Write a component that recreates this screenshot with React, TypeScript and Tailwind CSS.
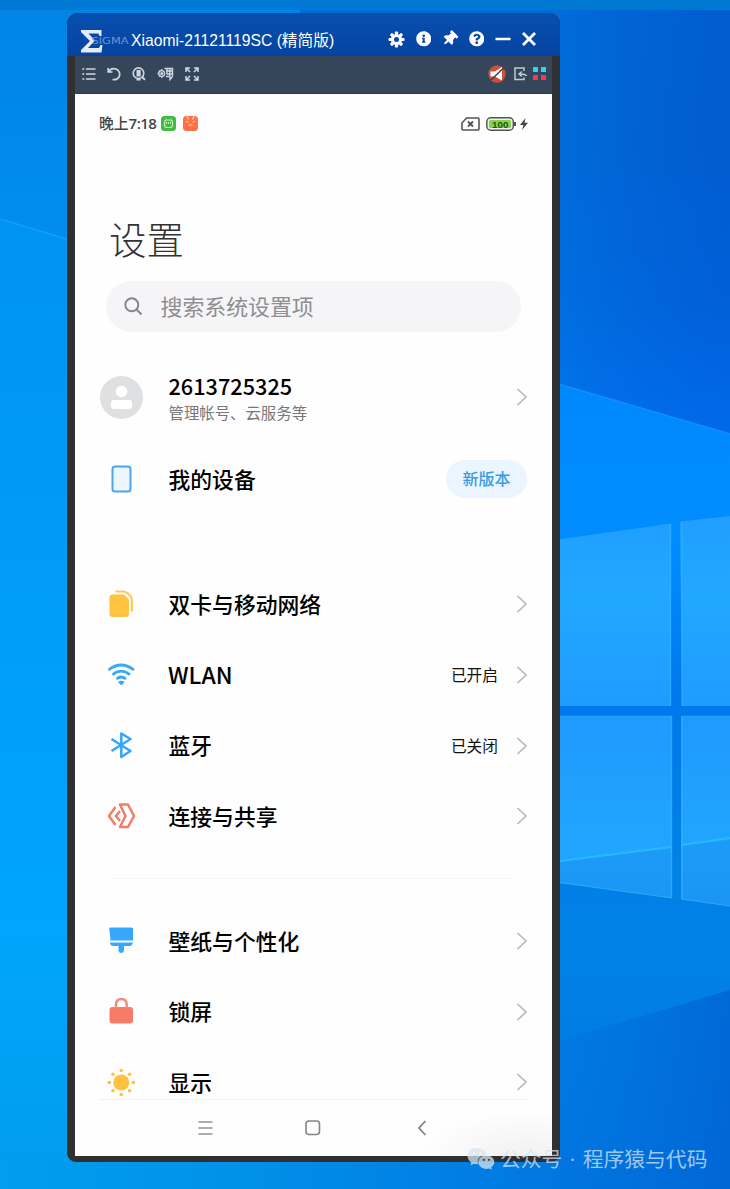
import React from "react";
import { FaInfoCircle, FaQuestionCircle, FaThumbtack, FaWeixin } from "react-icons/fa";

const CJK = "font-['Noto_Sans_CJK_SC',sans-serif]";

function Wallpaper() {
  return (
    <svg className="absolute inset-0 h-full w-full" viewBox="0 0 730 1189" preserveAspectRatio="none">
      <defs>
        <linearGradient id="left" x1="0" y1="0" x2="0" y2="1">
          <stop offset="0" stopColor="#0084e6" />
          <stop offset="0.2" stopColor="#008eec" />
          <stop offset="0.5" stopColor="#009bf6" />
          <stop offset="0.78" stopColor="#00a6fc" />
          <stop offset="1" stopColor="#009cee" />
        </linearGradient>
        <linearGradient id="right" x1="0" y1="0" x2="0" y2="1">
          <stop offset="0" stopColor="#0062d0" />
          <stop offset="0.12" stopColor="#0060d0" />
          <stop offset="0.25" stopColor="#0064de" />
          <stop offset="0.36" stopColor="#0072f6" />
          <stop offset="0.5" stopColor="#0078e8" />
          <stop offset="0.8" stopColor="#0082e6" />
          <stop offset="1" stopColor="#0074de" />
        </linearGradient>
        <linearGradient id="beam" x1="0" y1="0" x2="0" y2="1">
          <stop offset="0" stopColor="#0088fc" />
          <stop offset="0.27" stopColor="#008dff" />
          <stop offset="0.38" stopColor="#0088fb" />
          <stop offset="0.6" stopColor="#0078ea" />
          <stop offset="1" stopColor="#0084e6" />
        </linearGradient>
        <linearGradient id="paneTop" x1="0" y1="0" x2="0" y2="1">
          <stop offset="0" stopColor="#1f9eff" />
          <stop offset="0.4" stopColor="#22a8ff" />
          <stop offset="1" stopColor="#1e9cff" />
        </linearGradient>
        <linearGradient id="paneLow" x1="0" y1="0" x2="0" y2="1">
          <stop offset="0" stopColor="#1f99fe" />
          <stop offset="0.7" stopColor="#20a6ff" />
          <stop offset="1" stopColor="#1c98f6" />
        </linearGradient>
        <linearGradient id="floor" gradientUnits="userSpaceOnUse" x1="0" y1="0" x2="560" y2="0">
          <stop offset="0" stopColor="#009eee" />
          <stop offset="0.4" stopColor="#0092ea" />
          <stop offset="1" stopColor="#0077e0" />
        </linearGradient>
        <linearGradient id="edge" gradientUnits="userSpaceOnUse" x1="555" y1="0" x2="730" y2="0">
          <stop offset="0" stopColor="#0078e4" stopOpacity="0.5" />
          <stop offset="1" stopColor="#0054cc" stopOpacity="0.3" />
        </linearGradient>
        <linearGradient id="corner" gradientUnits="userSpaceOnUse" x1="555" y1="0" x2="730" y2="0">
          <stop offset="0" stopColor="#0076e2" stopOpacity="0.5" />
          <stop offset="1" stopColor="#0062d2" stopOpacity="0.75" />
        </linearGradient>
      </defs>
      <rect width="300" height="1189" fill="url(#left)" />
      <path d="M0 219L70 240V925L0 940Z" fill="#00a2ff" opacity="0.3" />
      <path d="M0 219L70 240" stroke="#18a4f8" strokeWidth="1.5" opacity="0.8" />
      <rect x="300" width="430" height="1189" fill="url(#right)" />
      <rect x="300" width="430" height="440" fill="url(#edge)" />
      <path d="M555 383L730 434V905L555 882Z" fill="url(#beam)" />
      <path d="M555 383L720 431L730 434" stroke="#1892fb" strokeWidth="1.500" fill="none" opacity="0.8" />
      <path d="M555 540L671 523.5V706H555ZM680 521.5L730 516V706H682Z" fill="url(#paneTop)" />
      <path d="M555 716H672V898L555 882ZM681 716H730V906L681 899Z" fill="url(#paneLow)" />
      <path d="M555 863L671 848V897.5L555 881ZM682 846L730 840V905L682 899Z" fill="#1b92f2" opacity="0.6" />
      <path d="M555 861.5L671 847M681 845L730 838" stroke="#28b8ff" strokeWidth="2" />
      <path d="M670.500 524V706M682 522V706M671.500 716V898M682 716V899" stroke="#30b2ff" strokeWidth="1.600" opacity="0.6" />
      <path d="M555 882L672 898M681 899L730 906M555 716H672M682 716H730" stroke="#30aeff" strokeWidth="1" opacity="0.8" fill="none" />
      <rect x="555" y="706.500" width="175" height="9" fill="#0079ee" />
      <path d="M555 1042L730 990V1189H555Z" fill="url(#corner)" />
      <rect y="1160" width="560" height="29" fill="url(#floor)" />
      <rect width="730" height="10" fill="#0079d5" />
    </svg>
  );
}

function SigmaLogo() {
  return (
    <svg width="49" height="24" viewBox="0 0 49 24">
      <path d="M0 1H20.500V7H18.500L17.500 4.500H7.500L14 11.500L7 19H18L19.500 16H21.500L20.500 23.500H0V21L9 12L0 3Z" fill="#e4ebf7" />
      <text x="10.500" y="15" textLength="37" lengthAdjust="spacingAndGlyphs" fill="#7096d2" className="font-['DejaVu_Sans',sans-serif] text-[9px]">SIGMA</text>
    </svg>
  );
}

function Gear() {
  return (
    <svg width="17" height="17" viewBox="0 0 17 17">
      {[0, 45, 90, 135].map((a) => (
        <rect key={a} x="6.900" y="0.500" width="3.200" height="16" rx="0.800" fill="currentColor" transform={`rotate(${a} 8.500 8.500)`} />
      ))}
      <circle cx="8.500" cy="8.500" r="5.600" fill="currentColor" />
      <circle cx="8.500" cy="8.500" r="2.500" fill="#0849a7" />
    </svg>
  );
}

function TitleBar() {
  return (
    <div className="flex h-[43px] shrink-0 items-center rounded-t-[11px] bg-linear-to-b from-[#0850ae] to-[#0643a0] pt-[9px] pr-6 pl-3.5 text-white">
      <div className="pt-1"><SigmaLogo /></div>
      <div className="ml-px w-[205px] pt-[3px] font-['Liberation_Sans','Noto_Sans_CJK_SC',sans-serif] text-[15.700px] leading-6 whitespace-nowrap">
        Xiaomi-21121119SC (精简版)
      </div>
      <div className="ml-auto flex items-center gap-[11px]">
        <Gear />
        <FaInfoCircle size={15.500} />
        <FaThumbtack size={15.500} className="rotate-45" />
        <FaQuestionCircle size={15.500} />
        <svg width="16" height="16" viewBox="0 0 16 16"><path d="M0.500 8H15.500" stroke="currentColor" strokeWidth="2.600" /></svg>
        <svg width="14" height="16" viewBox="0 0 14 16"><path d="M1 2L13 14M13 2L1 14" stroke="currentColor" strokeWidth="2.800" /></svg>
      </div>
    </div>
  );
}

function ToolBar() {
  return (
    <div className="mx-2 flex h-[38px] shrink-0 items-center border-b border-[#2b3b4c] bg-[#35465a] pr-[6px] pb-[2px] pl-[7px] text-[#cfd8e2]">
      <svg width="14" height="14" viewBox="0 0 14 14" fill="none" stroke="currentColor" strokeWidth="1.700">
        <path d="M4 2H13.500M4 7H13.500M4 12H13.500M0.300 2H2.300M0.300 7H2.300M0.300 12H2.300" />
      </svg>
      <svg className="ml-[11px]" width="14" height="14" viewBox="0 0 14 14" fill="none" stroke="currentColor" strokeWidth="1.700">
        <path d="M1.200 1V5H5.500M1.500 5C3 2 6 1 9 2C12.500 3.500 13.500 7 12 10C10.500 12.500 8 13 5.500 12.500" />
      </svg>
      <svg className="ml-[11px]" width="14" height="14" viewBox="0 0 14 14" fill="none" stroke="currentColor" strokeWidth="1.600">
        <circle cx="6.500" cy="6.200" r="5.300" /><path d="M10 10L13 12.800M4.500 12.500H8.500" strokeWidth="2" /><rect x="4.500" y="3" width="4.200" height="6.500" fill="currentColor" stroke="none" />
      </svg>
      <svg className="ml-[11px]" width="17" height="14" viewBox="0 0 17 14" fill="none" stroke="currentColor" strokeWidth="1.400">
        <circle cx="4.700" cy="6.500" r="2.900" /><circle cx="4.700" cy="6.500" r="0.800" /><path d="M4.700 2V3.500M4.700 9.500V11M0.500 6.500H2M2 3.500L3 4.500M2 9.500L3 8.500" />
        <path d="M7.500 1.500H15.500V9.500M9 4H15.500M9.500 7H15.500M10 1.500V7M12.800 1.500V9.500M9 9.500H12M15.500 9.500L13 12.500V9.500" />
      </svg>
      <svg className="ml-[11px]" width="14" height="14" viewBox="0 0 14 14" fill="none" stroke="currentColor" strokeWidth="1.500">
        <path d="M5 1H1V5M9 1H13V5M5 13H1V9M9 13H13V9M1 1L5 5M13 1L9 5M1 13L5 9M13 13L9 9" />
      </svg>
      <svg className="ml-auto" width="18" height="18" viewBox="0 0 18 18">
        <circle cx="9" cy="9" r="8.700" fill="#c9503f" />
        <path d="M2.500 6.500H7L14 2V15.500L7 11.500H2.500Z" fill="#fff" />
        <path d="M3 15L15.500 3" stroke="#493d3e" strokeWidth="1.500" />
      </svg>
      <svg className="ml-2" width="13" height="14" viewBox="0 0 13 14" fill="none" stroke="#c0cbd4" strokeWidth="1.500">
        <path d="M10 4V1H1V12.500H10V10.500M12.500 9C11.500 7 9 6.800 5.500 7M8 4.500L5 7L8 9.500" />
      </svg>
      <div className="ml-[6px] grid grid-cols-2 gap-[3px]">
        <i className="size-[5px] bg-[#2ed3f4]" /><i className="size-[5px] bg-[#2ed3f4]" />
        <i className="size-[5px] bg-[#ef3d50]" /><i className="size-[5px] bg-[#ef3d50]" />
      </div>
    </div>
  );
}

function StatusBar() {
  return (
    <div className="flex h-[59px] shrink-0 items-center pr-[23px] pl-6">
      <div className="w-[62px] text-[14.800px] font-medium whitespace-nowrap text-[#444]">晚上<span className="font-['Open_Sans',sans-serif] text-[15px] font-semibold tracking-[-0.500px]">7:18</span></div>
      <svg className="size-[15px]" viewBox="0 0 15 15">
        <rect width="15" height="15" rx="3.500" fill="#43ba43" /><rect x="3.500" y="4" width="8" height="7.500" rx="2.500" fill="none" stroke="#c5efbb" strokeWidth="1.200" />
        <path d="M5 3.500L4.500 2.500M10 3.500L10.500 2.500M5.500 6V8M7.500 6V8M9.500 6V8" stroke="#c5efbb" />
      </svg>
      <svg className="ml-[7px] size-[15px]" viewBox="0 0 15 15">
        <rect width="15" height="15" rx="3.500" fill="#ff7245" /><path d="M4 1L5.500 3M11 1L9.500 3M3.500 5.500L5 6M11.500 5.500L10 6M6 9H9" stroke="#ffd6bc" strokeWidth="1.200" strokeLinecap="round" />
      </svg>
      <svg className="ml-auto" width="19" height="14" viewBox="0 0 19 14" fill="none" stroke="#555" strokeWidth="1.600">
        <path d="M5.500 1H17Q18 1 18 2V12Q18 13 17 13H2Q1 13 1 12V6Z" /><path d="M7 4.500L12 9.500M12 4.500L7 9.500" strokeWidth="1.900" />
      </svg>
      <svg className="ml-[6px]" width="31" height="14" viewBox="0 0 31 14">
        <rect x="0.800" y="0.800" width="26.500" height="12.400" rx="4" fill="#eef5e8" stroke="#555" strokeWidth="1.500" />
        <rect x="3" y="3" width="22" height="8" rx="1.500" fill="#83d64c" /><path d="M29 5V9" stroke="#555" strokeWidth="2" />
        <text x="6" y="10.500" textLength="16.500" lengthAdjust="spacingAndGlyphs" fill="#2d4f1c" className="font-['Liberation_Sans',sans-serif] text-[9.500px] font-bold">100</text>
      </svg>
      <svg className="ml-[2px]" width="10" height="14" viewBox="0 0 10 14"><path d="M6.500 1L1 8H4.500L3 13L9 5.800H5.500Z" fill="#444" /></svg>
    </div>
  );
}

function Chevron() {
  return (
    <svg className="ml-[18px]" width="12" height="18" viewBox="0 0 12 18" fill="none">
      <path d="M1.500 1L10 9L1.500 17" stroke="#b9b9b9" strokeWidth="1.700" />
    </svg>
  );
}

const icons: Record<string, React.ReactNode> = {
  device: (<rect x="5.500" y="1.500" width="18" height="25" rx="2.500" fill="#edf5fd" stroke="#48a5ee" strokeWidth="2" />),
  sim: (<g><path d="M5.500 4.500H17L22 9.500V24Q22 27 19 27H5.500Q2.500 27 2.500 24V7.500Q2.500 4.500 5.500 4.500Z" fill="#ffc341" /><path d="M8.500 1.500H17Q25 4 25 12V21.500" fill="none" stroke="#ffc85c" strokeWidth="2.200" /></g>),
  wifi: (<g fill="none" stroke="#38a8f7" strokeWidth="2.700"><path d="M1.500 9Q14 -1 27 9M5.500 13.700Q14 6.500 23 13.700M9.500 18Q14 14 19 18" /><path d="M14.300 24.500L11 21Q14.300 18.500 17.600 21Z" fill="#38a8f7" stroke="none" /></g>),
  bluetooth: (<path d="M4.500 8L23.500 20L14.300 26V2.500L23.500 8L4.500 20" fill="none" stroke="#33a7f8" strokeWidth="2.500" strokeLinejoin="round" />),
  share: (<g fill="none" stroke="#ef7d68" strokeWidth="2.500"><path d="M8.500 5L2 14L8.500 23M13 2.500H21L27 14L21 25H13L18.500 14Z" strokeLinejoin="round" /><path d="M13 9L9 14L13 19" /></g>),
  brush: (<g fill="#36a8fb"><path d="M3.500 0.500H24.500Q26 0.500 26 2V13.500H3.500L2.500 4Q1.500 0.500 3.500 0.500Z" /><path d="M3 15.500H26Q25 19 22 19H17V23.500Q16.500 26 14.300 26Q12 26 11.500 23.500V19H7Q3 19 3 15.500Z" /></g>),
  lock: (<g><rect x="2.500" y="10" width="23.500" height="16.500" rx="3" fill="#f87b68" /><path d="M9 11V8Q9 2 14.300 2Q19.700 2 19.700 8V11" fill="none" stroke="#f08c7f" strokeWidth="2.500" /></g>),
  sun: (<g fill="#ffc23f"><circle cx="14.300" cy="14.500" r="8" />{[[14.300, 2.500], [14.300, 26.500], [2.300, 14.500], [26.300, 14.500], [6, 6.200], [22.600, 6.200], [6, 22.800], [22.600, 22.800]].map(([x, y]) => <circle key={`${x}-${y}`} cx={x} cy={y} r="1.800" />)}</g>),
};

function Row({ icon, label, value, latin }: { icon: string; label: string; value?: string; latin?: boolean }) {
  return (
    <div className="flex h-[70.700px] shrink-0 items-center pr-6 pl-8">
      <svg width="29" height="29" viewBox="0 0 29 29">{icons[icon]}</svg>
      <span className={latin ? "ml-[32px] pb-[2px] text-[23px] font-medium text-black" : "ml-[32.500px] text-[21.800px] font-medium whitespace-nowrap text-black"}>{label}</span>
      <span className="ml-auto text-[15.700px] text-[#111]">{value}</span>
      <Chevron />
    </div>
  );
}

function Screen() {
  return (
    <div className={`mx-2 flex h-[1062px] shrink-0 flex-col bg-[#fefefe] ${CJK}`}>
      <StatusBar />
      <h1 className="mt-[57px] ml-[34px] text-[37.500px] leading-[56px] font-light text-[#333]">设置</h1>
      <div className="mt-[15px] ml-[30.500px] flex h-[51px] w-[415px] shrink-0 items-center rounded-full bg-[#f5f5f7] pl-[18px]">
        <svg width="19" height="19" viewBox="0 0 19 19" fill="none" stroke="#858585" strokeWidth="1.900"><circle cx="7.800" cy="7.800" r="6.500" /><path d="M12.500 12.500L17.500 17.500" /></svg>
        <span className="ml-[18px] text-[21.900px] text-[#8e8e90]">搜索系统设置项</span>
      </div>
      <div className="mt-[22px] flex h-[86px] shrink-0 items-center pr-6 pl-[25px]">
        <svg width="43" height="43" viewBox="0 0 43 43"><circle cx="21.500" cy="21.500" r="21.500" fill="#dfe0e2" /><circle cx="21.500" cy="15.500" r="5.800" fill="#fff" /><rect x="11" y="24" width="21" height="9" rx="3" fill="#fff" /></svg>
        <div className="ml-[25.500px] pt-[3px]">
          <div className="text-[21.700px] leading-6 font-medium text-black">2613725325</div>
          <div className="mt-[3px] text-[15.400px] leading-[23px] text-[#777]">管理帐号、云服务等</div>
        </div>
        <div className="ml-auto"><Chevron /></div>
      </div>
      <div className="flex h-[78px] shrink-0 items-center pr-6 pl-8">
        <svg width="29" height="29" viewBox="0 0 29 29">{icons.device}</svg>
        <span className="ml-[32.500px] text-[21.800px] font-medium">我的设备</span>
        <span className="mr-px ml-auto flex h-[38px] w-[81px] items-center justify-center rounded-full bg-[#ebf5ff] pb-[2px] text-[16px] font-medium text-[#3b9be0]">新版本</span>
      </div>
      <div className="h-[51px] shrink-0" />
      <Row icon="sim" label="双卡与移动网络" />
      <Row icon="wifi" label="WLAN" value="已开启" latin />
      <Row icon="bluetooth" label="蓝牙" value="已关闭" />
      <Row icon="share" label="连接与共享" />
      <div className="mx-9 mt-[26px] mb-[27px] h-px shrink-0 bg-[#f7f7f7]" />
      <Row icon="brush" label="壁纸与个性化" />
      <Row icon="lock" label="锁屏" />
      <div className="h-[51.500px] shrink-0"><Row icon="sun" label="显示" /></div>
      <div className="mx-6 h-px shrink-0 bg-[#f2f2f2]" />
      <div className="flex flex-1 items-center bg-[radial-gradient(ellipse_110px_45px_at_95%_100%,#f1f1f1,#fefefe)] pl-[123px]">
        <svg width="15" height="16" viewBox="0 0 15 16"><path d="M0.500 2H14.500M0.500 8H14.500M0.500 14H14.500" stroke="#929292" strokeWidth="1.500" /></svg>
        <svg className="ml-[92px]" width="16" height="16" viewBox="0 0 16 16"><rect x="1" y="1" width="13.500" height="13.500" rx="3" fill="none" stroke="#858585" strokeWidth="1.600" /></svg>
        <svg className="ml-[96px]" width="10" height="16" viewBox="0 0 10 16"><path d="M8.500 1L2 8L8.500 15" fill="none" stroke="#808080" strokeWidth="1.800" /></svg>
      </div>
    </div>
  );
}

export default function App() {
  return (
    <div className="relative h-[1189px] w-[730px] overflow-hidden bg-[#0086e6]">
      <Wallpaper />
      <div className="relative pt-[13px] pl-[67px]">
        <div className="flex h-[1149px] w-[493px] flex-col overflow-hidden rounded-t-[11px] rounded-b-[9px] bg-[#303030]">
          <TitleBar />
          <ToolBar />
          <Screen />
        </div>
      </div>
      <div className={`absolute top-[1144px] left-[467px] flex items-center whitespace-nowrap text-[#d5e4f3]/75 ${CJK}`}>
        <FaWeixin size={28} />
        <span className="ml-[5px] font-['Open_Sans','Noto_Sans_CJK_SC',sans-serif] text-[20.800px] leading-[30px] [word-spacing:2px]">公众号 · 程序猿与代码</span>
      </div>
    </div>
  );
}
